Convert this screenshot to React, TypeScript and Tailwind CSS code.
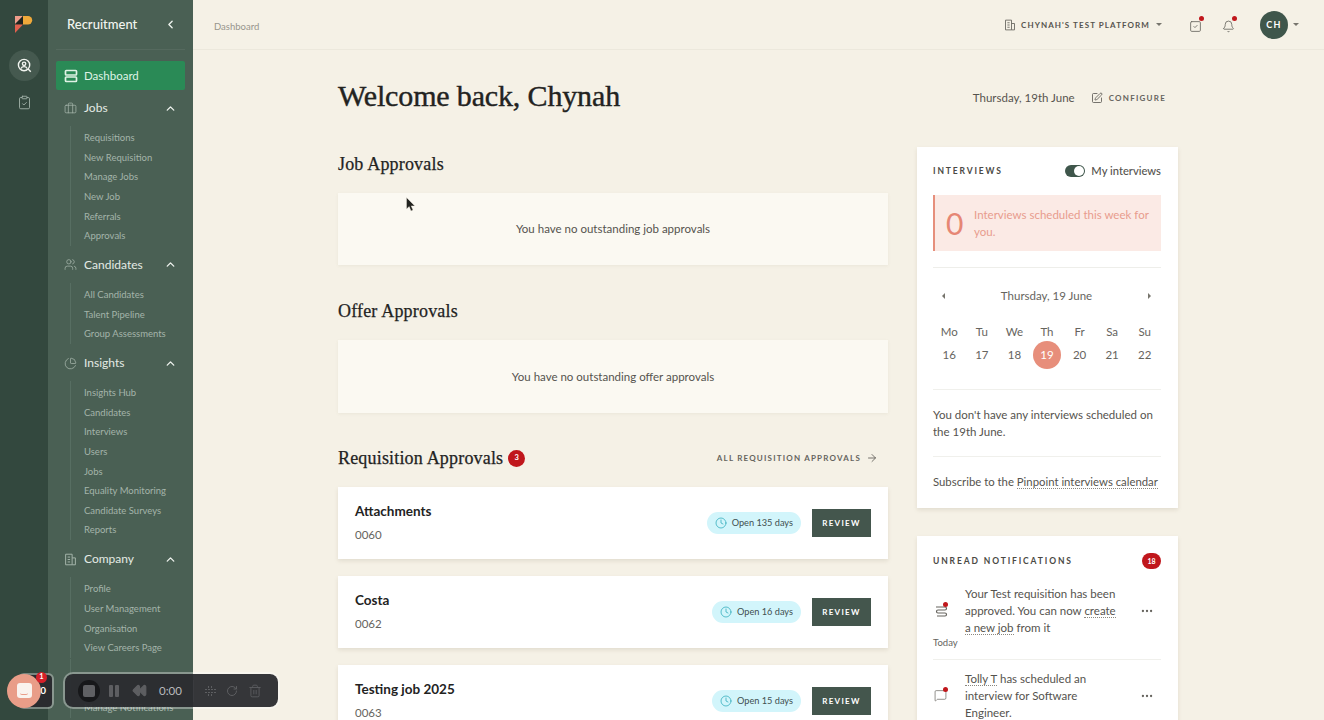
import {
  ArrowRight,
  Bell,
  Briefcase,
  ChartPie,
  ChevronLeft,
  ChevronUp,
  ClipboardCheck,
  Clock,
  Ellipsis,
  MessageSquare,
  Rewind,
  RotateCw,
  SquareCheck,
  SquarePen,
  Trash2,
  Users,
} from "lucide-react";
import type { ReactNode } from "react";

const serif = "font-['Liberation_Serif',serif]";

function Logo() {
  return (
    <svg width="20" height="20" viewBox="0 0 20 20" className="block">
      <path d="M1 1h8L1 9z" fill="#ee9d8b" />
      <path d="M9 1h5a4.2 4.2 0 0 1 0 8.4H9z" fill="#f0a93a" />
      <path d="M9 1v8.4H1z" fill="#20231f" />
      <path d="M1 9.4h8L1 18z" fill="#e0604e" />
    </svg>
  );
}

function BuildingIcon({ className }: { className: string }) {
  return (
    <svg viewBox="0 0 16 16" fill="none" stroke="currentColor" strokeWidth="1.2" className={className}>
      <path d="M2 14.5V1.5h8v13zM10 6h4v8.5h-4M4.5 5h3M4.5 8h3M4.5 11h3" />
    </svg>
  );
}

function DashboardIcon() {
  return (
    <svg width="14" height="14" viewBox="0 0 14 14" fill="none" stroke="#dff3e5" strokeWidth="1.7">
      <rect x="1.5" y="1.5" width="11" height="4.5" rx="0.8" />
      <rect x="1.5" y="8" width="11" height="4.5" rx="0.8" />
    </svg>
  );
}

function UserSearchIcon() {
  return (
    <svg width="15" height="15" viewBox="0 0 17 17" fill="none" stroke="#f1f4ef" strokeWidth="1.6">
      <circle cx="8" cy="8" r="6.4" />
      <circle cx="8" cy="6.6" r="1.9" />
      <path d="M4.6 12c.6-1.6 2-2.2 3.4-2.2s2.8.6 3.4 2.2M12.6 12.6l3 3" />
    </svg>
  );
}

function NavGroup({ icon, label, items }: { icon: ReactNode; label: string; items: string[] }) {
  return (
    <div className="pb-[0.9px]">
      <div className="flex h-9 items-center pl-2 pr-[8px]">
        <span className="flex w-5 justify-start text-[#a5b5ab]">{icon}</span>
        <span className="flex-1 text-[12px] text-[#e4ebe5]">{label}</span>
        <ChevronUp size={13} strokeWidth={2.5} className="text-[#eef3ee]" />
      </div>
      <ul className="ml-[14px] border-l border-[#576e62] pt-[2.5px] pl-[13px]">
        {items.map((item) => (
          <li key={item} className="flex h-[19.6px] items-center text-[9.5px] text-[#a4b4aa]">
            {item}
          </li>
        ))}
      </ul>
    </div>
  );
}

function Sidebar() {
  return (
    <aside className="flex w-[145px] shrink-0 flex-col overflow-hidden bg-[#4a6054]">
      <div className="mx-2 flex h-[50px] shrink-0 items-center justify-between border-b border-[#55695e] pl-[11px] pr-[8px]">
        <span className="text-[13px] font-medium text-[#f2f5f0]">Recruitment</span>
        <ChevronLeft size={13} strokeWidth={2.5} className="text-[#eef3ee]" />
      </div>
      <nav className="px-2 pt-[11px]">
        <div className="flex h-[29px] items-center rounded-[2px] bg-[#2a8a56] pl-2">
          <DashboardIcon />
          <span className="ml-[6px] text-[11.5px] text-[#dff3e5]">Dashboard</span>
        </div>
        <NavGroup
          icon={<Briefcase size={13} strokeWidth={1.4} />}
          label="Jobs"
          items={["Requisitions", "New Requisition", "Manage Jobs", "New Job", "Referrals", "Approvals"]}
        />
        <NavGroup
          icon={<Users size={13} strokeWidth={1.4} />}
          label="Candidates"
          items={["All Candidates", "Talent Pipeline", "Group Assessments"]}
        />
        <NavGroup
          icon={<ChartPie size={13} strokeWidth={1.4} />}
          label="Insights"
          items={[
            "Insights Hub",
            "Candidates",
            "Interviews",
            "Users",
            "Jobs",
            "Equality Monitoring",
            "Candidate Surveys",
            "Reports",
          ]}
        />
        <NavGroup
          icon={<BuildingIcon className="h-[13px] w-[13px]" />}
          label="Company"
          items={["Profile", "User Management", "Organisation", "View Careers Page"]}
        />
        <ul className="ml-[14px] border-l border-[#576e62] pl-[13px] pt-[39px]">
          <li className="flex h-[19.6px] items-center text-[9.5px] text-[#a4b4aa]">Manage Notifications</li>
        </ul>
      </nav>
    </aside>
  );
}

function TopBar() {
  return (
    <header className="flex h-[50px] shrink-0 items-center border-b border-[#ece8dc] pl-[21px] pr-[25px]">
      <span className="mt-[5px] text-[9.5px] text-[#97958d]">Dashboard</span>
      <div className="ml-auto flex items-center text-[#6b6a63]">
        <BuildingIcon className="h-3 w-3" />
        <span className="ml-[5px] text-[8px] font-bold tracking-[0.135em] text-[#55544e]">CHYNAH'S TEST PLATFORM</span>
        <span className="ml-[6px] h-0 w-0 border-x-[3px] border-t-[3px] border-x-transparent border-t-[#77756d]" />
        <span className="relative ml-[27px] mt-[4px]">
          <SquareCheck size={13} strokeWidth={1.6} />
          <i className="absolute -right-[2px] -top-[4px] h-[5px] w-[5px] rounded-full bg-[#c0171c]" />
        </span>
        <span className="relative ml-[20px] mt-[4px]">
          <Bell size={13} strokeWidth={1.6} />
          <i className="absolute -right-[2px] -top-[4px] h-[5px] w-[5px] rounded-full bg-[#c0171c]" />
        </span>
        <span className="ml-[25px] flex h-7 w-7 items-center justify-center rounded-full bg-[#3f564b] text-[9px] font-bold tracking-[0.14em] text-white">
          CH
        </span>
        <span className="ml-[5px] h-0 w-0 border-x-[3px] border-t-[3px] border-x-transparent border-t-[#77756d]" />
      </div>
    </header>
  );
}

function SectionHeading({ children }: { children: ReactNode }) {
  return <h2 className={`${serif} text-[18px] tracking-[0.01em] text-[#23231f] [-webkit-text-stroke:0.25px]`}>{children}</h2>;
}

function EmptyBox({ text, tall }: { text: string; tall?: boolean }) {
  return (
    <div
      className={`mt-3 flex items-center justify-center bg-[#fbf9f2] text-[11.5px] text-[#55534e] shadow-[0_1px_3px_rgba(120,110,80,0.08)] ${
        tall ? "h-[73px]" : "h-[72px]"
      }`}
    >
      {text}
    </div>
  );
}

function ReqCard({ title, code, days }: { title: string; code: string; days: string }) {
  return (
    <div className="flex h-[72px] shrink-0 items-center justify-between bg-white px-[17px] shadow-[0_2px_4px_rgba(120,110,80,0.15)]">
      <div>
        <div className="text-[13.5px] font-bold leading-[17px] text-[#23231f]">{title}</div>
        <div className="mt-[6px] text-[11.5px] leading-[17px] text-[#66645e]">{code}</div>
      </div>
      <div className="flex items-center">
        <span className="flex h-[22px] items-center rounded-full bg-[#d2f5fb] pl-2 pr-2 text-[9.2px] text-[#3f4f50]">
          <Clock size={12} strokeWidth={1.4} className="mr-[5px] text-[#21a5b5]" />
          {days}
        </span>
        <button className="ml-[11px] h-7 w-[59px] bg-[#44564d] text-[8px] font-bold tracking-[0.16em] text-white">REVIEW</button>
      </div>
    </div>
  );
}

function InterviewsCard() {
  const days = ["Mo", "Tu", "We", "Th", "Fr", "Sa", "Su"];
  const dates = [16, 17, 18, 19, 20, 21, 22];
  return (
    <section className="h-[361px] bg-white pl-4 pr-[17px] pt-4 shadow-[0_2px_4px_rgba(120,110,80,0.15)]">
      <div className="flex h-4 items-center justify-between">
        <span className="text-[8.5px] font-bold tracking-[0.22em] text-[#4a4944]">INTERVIEWS</span>
        <span className="flex items-center">
          <span className="flex h-3 w-5 items-center justify-end rounded-full bg-[#3f564b] pr-px">
            <i className="h-[10px] w-[10px] rounded-full bg-white" />
          </span>
          <span className="ml-[6px] text-[11.2px] font-medium text-[#55534e]">My interviews</span>
        </span>
      </div>
      <div className="mt-4 flex h-14 items-center border-l-2 border-[#e68f7c] bg-[#fbeae5] pl-[11px] pr-2">
        <span className="w-7 shrink-0 text-[30px] leading-none text-[#e68674]">0</span>
        <span className="text-[11.5px] leading-[17px] text-[#e89c8d]">Interviews scheduled this week for you.</span>
      </div>
      <div className="mt-4 border-t border-[#eeeeea]" />
      <div className="mt-[19px] flex h-[17px] items-center justify-between pl-[9px] pr-[10px] text-[11.5px] text-[#66645e]">
        <span className="h-0 w-0 border-y-[3px] border-r-[3px] border-y-transparent border-r-[#77756d]" />
        Thursday, 19 June
        <span className="h-0 w-0 border-y-[3px] border-l-[3px] border-y-transparent border-l-[#77756d]" />
      </div>
      <div className="mt-[18px] grid grid-cols-7 text-center text-[11.5px] text-[#66645e]">
        {days.map((d) => (
          <span key={d} className="flex h-[20px] items-center justify-center">
            {d}
          </span>
        ))}
        {dates.map((d) => (
          <span key={d} className="-mt-px flex h-7 items-center justify-center">
            {d === 19 ? (
              <span className="flex h-7 w-7 items-center justify-center rounded-full bg-[#e78e7b] text-white">{d}</span>
            ) : (
              d
            )}
          </span>
        ))}
      </div>
      <div className="mt-[20px] border-t border-[#f0f0ec]" />
      <p className="mt-4 text-[11.5px] leading-[17px] text-[#55534e]">You don't have any interviews scheduled on the 19th June.</p>
      <div className="mt-4 border-t border-[#f0f0ec]" />
      <p className="mt-4 whitespace-nowrap text-[11.35px] leading-[17px] text-[#55534e]">
        Subscribe to the <span className="border-b border-dotted border-[#8a8880]">Pinpoint interviews calendar</span>
      </p>
    </section>
  );
}

function Notification({ icon, lines, today }: { icon: ReactNode; lines: ReactNode; today?: boolean }) {
  return (
    <div className="relative flex items-center">
      <span className="relative ml-[1px] flex w-[31px] shrink-0 text-[#66645e]">
        {icon}
        <i className="absolute left-[9px] -top-[2px] h-[5px] w-[5px] rounded-full bg-[#c0171c]" />
      </span>
      <p className="w-[155px] text-[11.5px] leading-[17px] text-[#55534e]">{lines}</p>
      <Ellipsis size={14} className="ml-[20px] text-[#66645e]" />
      {today && <span className="absolute left-0 top-[51px] text-[9.5px] text-[#66645e]">Today</span>}
    </div>
  );
}

function NotificationsCard() {
  const link = "border-b border-dotted border-[#8a8880]";
  return (
    <section className="mt-7 h-[300px] bg-white pl-4 pr-[17px] pt-[17px] shadow-[0_2px_4px_rgba(120,110,80,0.15)]">
      <div className="flex h-4 items-center justify-between">
        <span className="text-[8.5px] font-bold tracking-[0.22em] text-[#4a4944]">UNREAD NOTIFICATIONS</span>
        <span className="flex h-4 w-[19px] items-center justify-center rounded-full bg-[#c0171c] text-[7px] font-bold text-white">18</span>
      </div>
      <div className="mt-[16px]">
        <Notification
          today
          icon={
            <svg width="14" height="14" viewBox="0 0 14 14" fill="none" stroke="currentColor" strokeWidth="1.2">
              <path d="M2 3h9a1.5 1.5 0 0 1 0 3H4a1.5 1.5 0 0 0 0 3h7a1.5 1.5 0 0 1 0 3H3" />
            </svg>
          }
          lines={
            <>
              Your Test requisition has been approved. You can now <span className={link}>create a new job</span> from it
            </>
          }
        />
      </div>
      <div className="mt-[23px] border-t border-[#f0f0ec]" />
      <div className="mt-[10px]">
        <Notification
          icon={<MessageSquare size={13} strokeWidth={1.3} />}
          lines={
            <>
              <span className={link}>Tolly T</span> has scheduled an interview for Software Engineer.
            </>
          }
        />
      </div>
    </section>
  );
}

function RecorderBar() {
  return (
    <div className="absolute bottom-[11px] left-[7px] flex items-center">
      <div className="relative h-[36px] w-[47px]">
        <div className="absolute left-[11px] top-0 flex h-[36px] w-[36px] items-center justify-end rounded-[6px] border-2 border-white/35 bg-[#2a2b2f] bg-clip-padding pr-[6px] text-[10px] font-bold text-white">
          0
        </div>
        <div className="absolute left-0 top-[1px] flex h-[34px] w-[34px] items-center justify-center rounded-full bg-[#e99d88]">
          <div className="flex h-[15px] w-[15px] items-end justify-center rounded-[3px] bg-[#faf3ee] pb-[3px]">
            <i className="h-[2px] w-[8px] rounded-b-full border-b border-[#e99d88]" />
          </div>
        </div>
        <div className="absolute left-[29px] top-[-1px] flex h-[11px] w-[11px] items-center justify-center rounded-full bg-[#d5202a] text-[7.5px] font-bold text-white">
          1
        </div>
      </div>
      <div className="ml-[9px] flex h-[37px] w-[217px] items-center rounded-[10px] border-2 border-white/35 bg-[#2a2b2f]/95 bg-clip-padding pl-[13px] text-[#5d5e61]">
        <span className="flex h-[22px] w-[22px] items-center justify-center rounded-full bg-[#17181a]">
          <i className="h-3 w-3 rounded-[2px] bg-[#5f6063]" />
        </span>
        <span className="ml-[9px] flex gap-[2px]">
          <i className="h-3 w-1 rounded-[1px] bg-[#5d5e61]" />
          <i className="h-3 w-1 rounded-[1px] bg-[#5d5e61]" />
        </span>
        <Rewind size={15} fill="currentColor" className="ml-[13px]" />
        <span className="ml-[12px] text-[11.5px] text-[#b9babc]">0:00</span>
        <i className="ml-[11px] h-[22px] w-px bg-[#3a3b3f]" />
        <svg width="13" height="13" viewBox="0 0 13 13" fill="currentColor" className="ml-[10px]">
          <path d="M1 5h2v1H1zM1 8h2v1H1zM4 2h1v2H4zM4 5h2v1H4zM4 8h2v1H4zM4 10h1v2H4zM7 2h1v2H7zM7 5h2v1H7zM7 8h2v1H7zM7 10h1v2H7zM10 5h2v1h-2zM10 8h2v1h-2z" />
        </svg>
        <RotateCw size={12} className="ml-[9px]" />
        <Trash2 size={14} strokeWidth={1.5} className="ml-[10px]" />
      </div>
    </div>
  );
}

function Cursor() {
  return (
    <svg width="10" height="16" viewBox="0 0 10 16" className="absolute left-[406px] top-[197px]">
      <path d="M0.5 0.5v11.5l2.7-2.4 1.8 4.4 2-.9-1.8-4.2h3.6z" fill="#22231f" stroke="#f5f1e6" strokeWidth="0.4" />
    </svg>
  );
}

export default function App() {
  return (
    <div className="relative flex h-screen overflow-hidden bg-[#f5f1e6] font-['Lato',sans-serif]">
      <div className="flex w-12 shrink-0 flex-col items-center bg-[#33483e]">
        <div className="mt-[15px]">
          <Logo />
        </div>
        <span className="mt-[15px] flex h-[31px] w-[31px] items-center justify-center rounded-full bg-[#45594f]">
          <UserSearchIcon />
        </span>
        <ClipboardCheck size={15} strokeWidth={1.4} className="mt-[14px] text-[#a5b5ab]" />
      </div>
      <Sidebar />
      <main className="flex min-w-0 flex-1 flex-col">
        <TopBar />
        <div className="ml-[145px] w-[840px]">
          <div className="mt-[26px] flex h-10 items-center">
            <h1 className={`${serif} -mt-[2px] text-[30px] tracking-[-0.005em] text-[#23231f] [-webkit-text-stroke:0.4px]`}>Welcome back, Chynah</h1>
            <span className="ml-auto mt-[4px] text-[11.5px] text-[#55534e]">Thursday, 19th June</span>
            <SquarePen size={12} strokeWidth={1.6} className="ml-[16px] mt-[4px] text-[#55534e]" />
            <span className="ml-[6px] mr-3 mt-[4px] text-[8px] font-bold tracking-[0.155em] text-[#66645e]">CONFIGURE</span>
          </div>
          <div className="mt-[31px] flex items-start gap-[29px]">
            <div className="flex w-[550px] shrink-0 flex-col">
              <div className="flex h-[34px] items-center">
                <SectionHeading>Job Approvals</SectionHeading>
              </div>
              <EmptyBox text="You have no outstanding job approvals" />
              <div className="mt-[29px] flex h-[34px] items-center">
                <SectionHeading>Offer Approvals</SectionHeading>
              </div>
              <EmptyBox tall text="You have no outstanding offer approvals" />
              <div className="mt-7 flex h-[34px] items-center">
                <SectionHeading>Requisition Approvals</SectionHeading>
                <span className="ml-[5px] flex h-[17px] w-[17px] items-center justify-center rounded-full bg-[#c0171c] text-[7.5px] font-bold text-white">
                  3
                </span>
                <span className="ml-auto text-[8px] font-bold tracking-[0.15em] text-[#66645e]">ALL REQUISITION APPROVALS</span>
                <ArrowRight size={12} strokeWidth={1.6} className="ml-[5px] mr-[10px] text-[#55534e]" />
              </div>
              <div className="mt-3 flex flex-col gap-[17px]">
                <ReqCard title="Attachments" code="0060" days="Open 135 days" />
                <ReqCard title="Costa" code="0062" days="Open 16 days" />
                <ReqCard title="Testing job 2025" code="0063" days="Open 15 days" />
              </div>
            </div>
            <div className="w-[261px] shrink-0">
              <InterviewsCard />
              <NotificationsCard />
            </div>
          </div>
        </div>
      </main>
      <RecorderBar />
      <Cursor />
    </div>
  );
}
